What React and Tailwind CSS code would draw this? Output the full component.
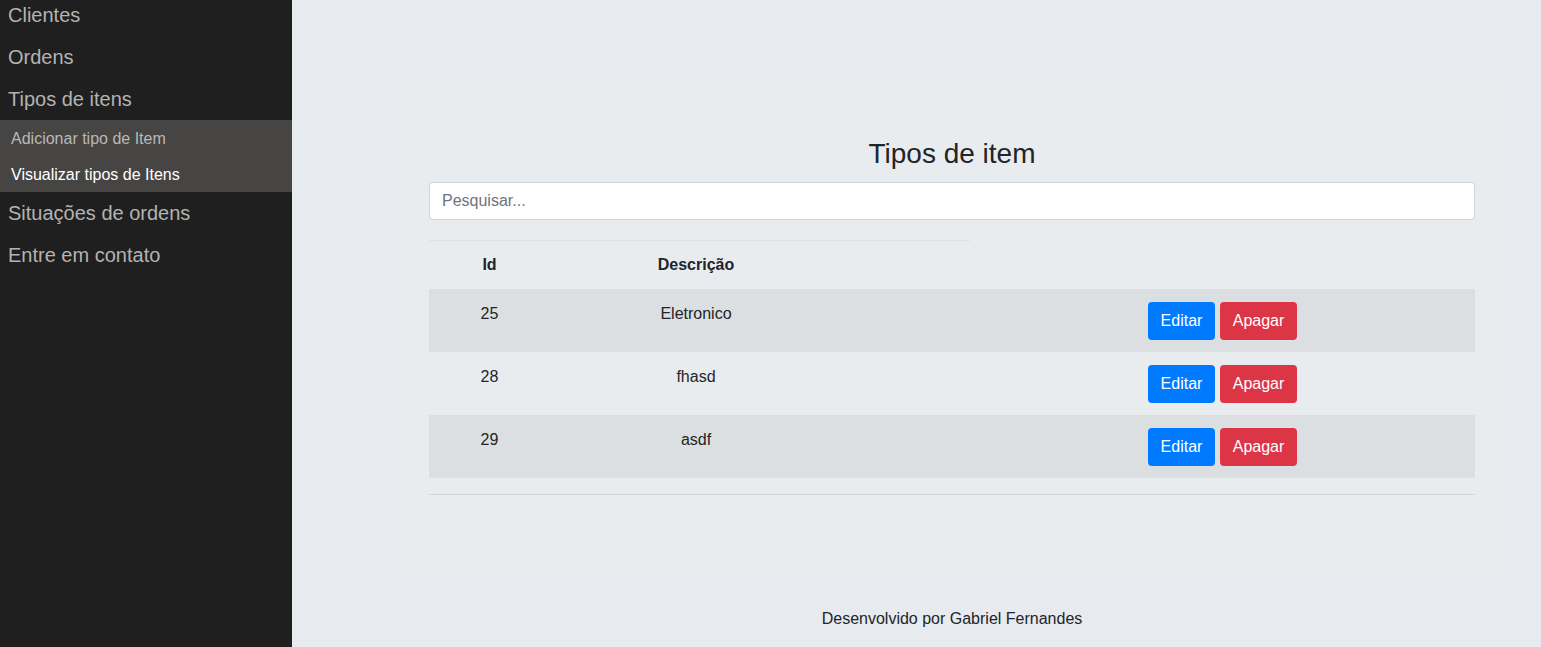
export default function App() {
  const rows = [
    { id: 25, desc: "Eletronico" },
    { id: 28, desc: "fhasd" },
    { id: 29, desc: "asdf" },
  ];
  const font = { fontFamily: '"Liberation Sans", Arial, sans-serif' };
  return (
    <div className="flex h-[647px] w-[1541px] overflow-hidden bg-[#e7eaee]" style={font}>
      <aside className="w-[292px] shrink-0 bg-[#1f1f1f]">
        <div className="-mt-[6px] flex flex-col">
          <div className="flex h-[42px] items-center pl-[8px] text-[20px] text-[#b3b3b3]">Clientes</div>
          <div className="flex h-[42px] items-center pl-[8px] text-[20px] text-[#b3b3b3]">Ordens</div>
          <div className="flex h-[42px] items-center pl-[8px] text-[20px] text-[#b3b3b3]">Tipos de itens</div>
          <div className="flex flex-col bg-[#474543]">
            <div className="flex h-[36px] items-center pl-[11px] pt-[2px] text-[16px] text-[#b8b8b8]">Adicionar tipo de Item</div>
            <div className="flex h-[36px] items-center pl-[11px] pt-[2px] text-[16px] text-white">Visualizar tipos de Itens</div>
          </div>
          <div className="flex h-[42px] items-center pl-[8px] text-[20px] text-[#b3b3b3]">Situações de ordens</div>
          <div className="flex h-[42px] items-center pl-[8px] text-[20px] text-[#b3b3b3]">Entre em contato</div>
        </div>
      </aside>
      <main className="flex-1">
        <div className="ml-[105px] w-[1110px]">
          <div className="mt-[72px] h-[503px] rounded-[6px] bg-[#e9ecef] px-[32px] pt-[65px]">
            <h3 className="text-center text-[28px] leading-[34px] text-[#212529]">Tipos de item</h3>
            <input
              className="mt-[11px] block h-[38px] w-full rounded-[4px] border border-[#ced4da] bg-white px-[12px] text-[16px] text-[#495057] placeholder-[#6c757d] outline-none"
              placeholder="Pesquisar..."
              style={font}
            />
            <div className="mt-[20px] text-[16px] text-[#212529]">
              <div className="grid h-[49px] grid-cols-[121px_292px_128px_505px]">
                <div className="col-span-3 grid grid-cols-[121px_292px_128px] border-t border-[#dee2e6]">
                  <div className="pt-[12px] text-center font-bold leading-[24px]">Id</div>
                  <div className="pt-[12px] text-center font-bold leading-[24px]">Descrição</div>
                  <div></div>
                </div>
              </div>
              {rows.map((r, i) => (
                <div
                  key={r.id}
                  className={`grid h-[63px] grid-cols-[121px_292px_128px_505px] ${i % 2 === 0 ? "bg-[#dcdfe2]" : ""}`}
                >
                  <div className="pt-[13px] text-center leading-[24px]">{r.id}</div>
                  <div className="pt-[13px] text-center leading-[24px]">{r.desc}</div>
                  <div></div>
                  <div className="flex justify-center gap-[5px] pt-[13px]">
                    <button className="h-[38px] w-[67px] rounded-[4px] bg-[#007bff] text-[16px] text-white" style={font}>Editar</button>
                    <button className="h-[38px] w-[77px] rounded-[4px] bg-[#dc3545] text-[16px] text-white" style={font}>Apagar</button>
                  </div>
                </div>
              ))}
              <div className="mt-[16px] border-t border-[#d2d5d9]"></div>
            </div>
          </div>
          <div className="mt-[34px] text-center text-[16px] leading-[20px] text-[#212529]">Desenvolvido por Gabriel Fernandes</div>
        </div>
      </main>
    </div>
  );
}
